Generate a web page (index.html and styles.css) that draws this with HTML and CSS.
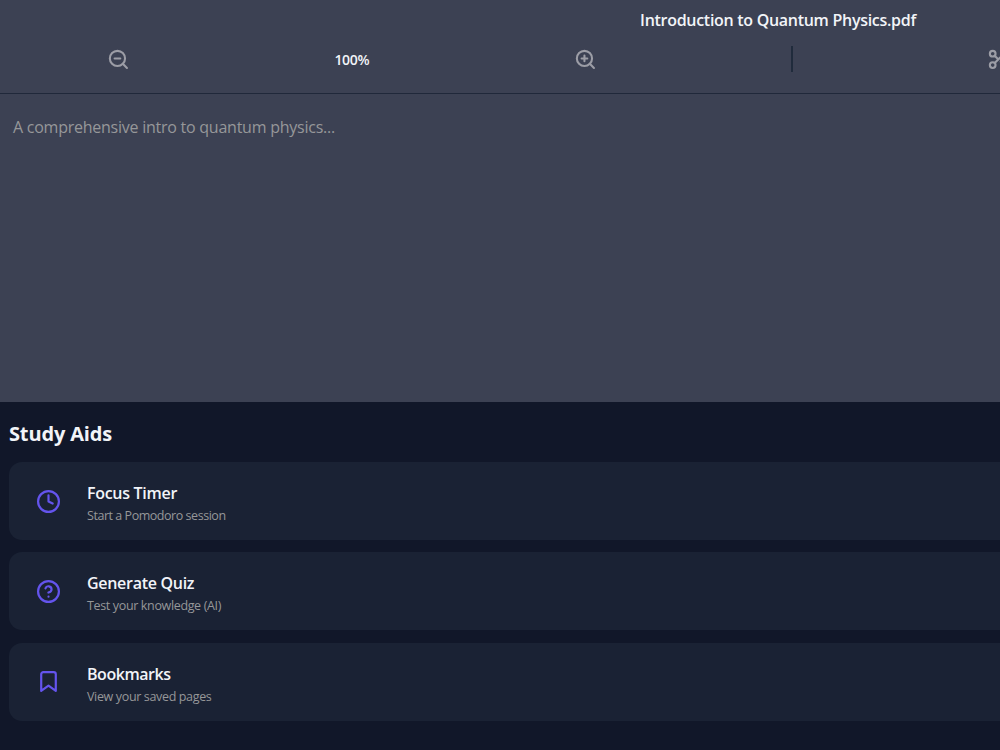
FILE: index.html
```html
<!DOCTYPE html>
<html lang="en">
<head>
<meta charset="utf-8">
<title>Study Viewer</title>
<link rel="stylesheet" href="styles.css">
</head>
<body>
<div class="page">
  <section class="viewer">
    <header class="viewer-header">
      <h1 class="doc-title">Introduction to Quantum Physics.pdf</h1>
      <div class="toolbar">
        <div class="tool"><svg class="tool-icon" viewBox="0 0 24 24"><circle cx="11" cy="11" r="8"/><path d="M21 21l-4.35-4.35M8 11h6"/></svg></div>
        <div class="tool"><span class="zoom-level">100%</span></div>
        <div class="tool"><svg class="tool-icon" viewBox="0 0 24 24"><circle cx="11" cy="11" r="8"/><path d="M21 21l-4.35-4.35M8 11h6M11 8v6"/></svg></div>
        <div class="separator"><i class="rule"></i></div>
        <div class="tool"><svg class="tool-icon" viewBox="0 0 24 24"><circle cx="6" cy="6" r="3"/><circle cx="6" cy="18" r="3"/><path d="M20 4L8.12 15.88M14.47 14.48L20 20M8.12 8.12L12 12"/></svg></div>
      </div>
    </header>
    <p class="doc-text">A comprehensive intro to quantum physics...</p>
  </section>
  <section class="aids">
    <h2 class="aids-title">Study Aids</h2>
    <div class="card">
      <svg class="card-icon" viewBox="0 0 24 24"><circle cx="12" cy="12" r="10"/><path d="M12 6v6l4 2"/></svg>
      <div class="card-body"><h3 class="card-title">Focus Timer</h3><p class="card-note note-tight">Start a Pomodoro session</p></div>
    </div>
    <div class="card">
      <svg class="card-icon" viewBox="0 0 24 24"><circle cx="12" cy="12" r="10"/><path d="M9.09 9a3 3 0 0 1 5.83 1c0 2-3 3-3 3M12 17h.01"/></svg>
      <div class="card-body"><h3 class="card-title">Generate Quiz</h3><p class="card-note">Test your knowledge (AI)</p></div>
    </div>
    <div class="card">
      <svg class="card-icon" viewBox="0 0 24 24"><path d="M19 21l-7-5-7 5V5a2 2 0 0 1 2-2h10a2 2 0 0 1 2 2z"/></svg>
      <div class="card-body"><h3 class="card-title title-tight">Bookmarks</h3><p class="card-note">View your saved pages</p></div>
    </div>
  </section>
</div>
</body>
</html>
```
FILE: styles.css
```css
* { box-sizing: border-box; }
body, h1, h2, h3, p { margin: 0; }
body {
  overflow: hidden;
  background: #111729;
  color: #f2f4f8;
  font-family: "Open Sans", "Noto Sans", sans-serif;
}
svg {
  display: block;
  fill: none;
  stroke: currentColor;
  stroke-width: 2.2;
  stroke-linecap: round;
  stroke-linejoin: round;
}
.page { width: 100%; height: 750px; overflow: hidden; }
.viewer { width: 1556px; height: 402px; background: #3c4153; }
.viewer-header { height: 94px; border-bottom: 1px solid #20283a; }
.doc-title { padding-top: 8px; font-size: 16px; line-height: 24px; font-weight: 600; letter-spacing: -0.29px; text-align: center; white-space: nowrap; }
.toolbar { display: flex; height: 54px; padding-left: 1.6px; align-items: center; }
.tool { flex: none; display: flex; width: 233.5px; justify-content: center; align-items: center; }
.tool-icon { width: 22.8px; height: 22.8px; color: #9c9da6; }
.zoom-level { font-size: 14px; line-height: 20px; font-weight: 600; letter-spacing: -0.3px; padding-top: 2px; }
.separator { flex: none; display: flex; width: 180px; justify-content: center; }
.rule { width: 2px; height: 26px; background: #202b3c; }
.doc-text { padding: 21px 13px 0; font-size: 16px; line-height: 24px; letter-spacing: -0.245px; color: #969799; }
.aids { width: 1556px; height: 348px; padding: 16px 9px 0; display: flex; flex-direction: column; gap: 12.4px; }
.aids-title { font-size: 20px; line-height: 31.7px; font-weight: 700; letter-spacing: -0.15px; }
.card {
  flex: none;
  display: flex;
  align-items: center;
  height: 78px;
  padding-left: 27px;
  gap: 26px;
  border-radius: 13px;
  background: #1a2234;
}
.card-icon { flex: none; width: 25px; height: 25px; color: #6454ed; stroke-width: 2.1; }
.card-body { padding-top: 5px; }
.card-title { font-size: 16px; line-height: 24px; font-weight: 600; letter-spacing: -0.29px; }
.card-note { font-size: 12.5px; line-height: 21px; letter-spacing: -0.35px; color: #969799; }
.title-tight { letter-spacing: -0.46px; }
.note-tight { letter-spacing: -0.46px; }
```
